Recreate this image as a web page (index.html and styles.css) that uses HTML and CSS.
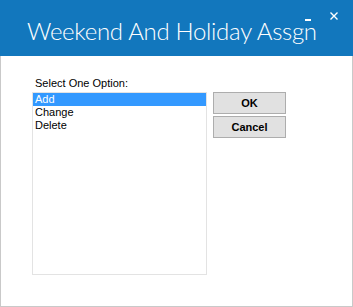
FILE: index.html
```html
<!DOCTYPE html>
<html>
<head>
<meta charset="utf-8">
<link rel="stylesheet" href="styles.css">
</head>
<body>
<div class="window">
  <div class="titlebar">
    <div class="title">Weekend And Holiday Assgn</div>
    <div class="controls">
      <span class="min"></span>
      <svg class="close" width="8" height="8" viewBox="0 0 8 8"><path d="M0.5 0.5 L7.5 7.5 M7.5 0.5 L0.5 7.5" stroke="#fff" stroke-width="1.4" fill="none"/></svg>
    </div>
  </div>
  <div class="content">
    <div class="label">Select One Option:</div>
    <div class="row">
      <div class="listbox">
        <div class="item selected">Add</div>
        <div class="item">Change</div>
        <div class="item">Delete</div>
      </div>
      <div class="buttons">
        <button class="btn">OK</button>
        <button class="btn">Cancel</button>
      </div>
    </div>
  </div>
</div>
</body>
</html>
```

FILE: styles.css
```css
html, body {
  margin: 0;
  padding: 0;
  background: #fff;
}
.window {
  width: 353px;
  height: 307px;
  box-sizing: border-box;
  border: 1px solid #c9c9c9;
  border-top: none;
  display: flex;
  flex-direction: column;
  font-family: "Liberation Sans", Arial, sans-serif;
}
.titlebar {
  height: 56px;
  margin: 0 -1px;
  background: #1277bd;
  position: relative;
  display: flex;
  align-items: flex-end;
}
.title {
  color: #fff;
  font-family: Lato, "Open Sans", sans-serif;
  font-weight: 300;
  font-size: 24px;
  letter-spacing: -0.3px;
  line-height: 30px;
  padding: 0 0 10px 27px;
  white-space: nowrap;
}
.controls {
  position: absolute;
  top: 12px;
  right: 15px;
  display: flex;
  align-items: flex-start;
  gap: 19px;
}
.min {
  display: block;
  width: 6px;
  height: 2px;
  background: #fff;
  margin-top: 7px;
}
.close {
  display: block;
}
.content {
  padding: 20px 0 0 31px;
}
.label {
  font-size: 11px;
  line-height: 14px;
  color: #000;
  padding-left: 3px;
  height: 16px;
}
.row {
  display: flex;
  gap: 6px;
}
.listbox {
  width: 175px;
  height: 183px;
  box-sizing: border-box;
  border: 1px solid #e3e3e3;
}
.item {
  height: 13px;
  line-height: 13px;
  font-size: 11px;
  color: #000;
  padding-left: 2px;
}
.item.selected {
  background: #3399ff;
  color: #fff;
}
.buttons {
  display: flex;
  flex-direction: column;
  gap: 2px;
}
.btn {
  width: 73px;
  height: 22px;
  box-sizing: border-box;
  margin: 0;
  padding: 0;
  background: #e1e1e1;
  border: 1px solid #adadad;
  font-family: "Liberation Sans", Arial, sans-serif;
  font-weight: bold;
  font-size: 11px;
  color: #000;
}
```
